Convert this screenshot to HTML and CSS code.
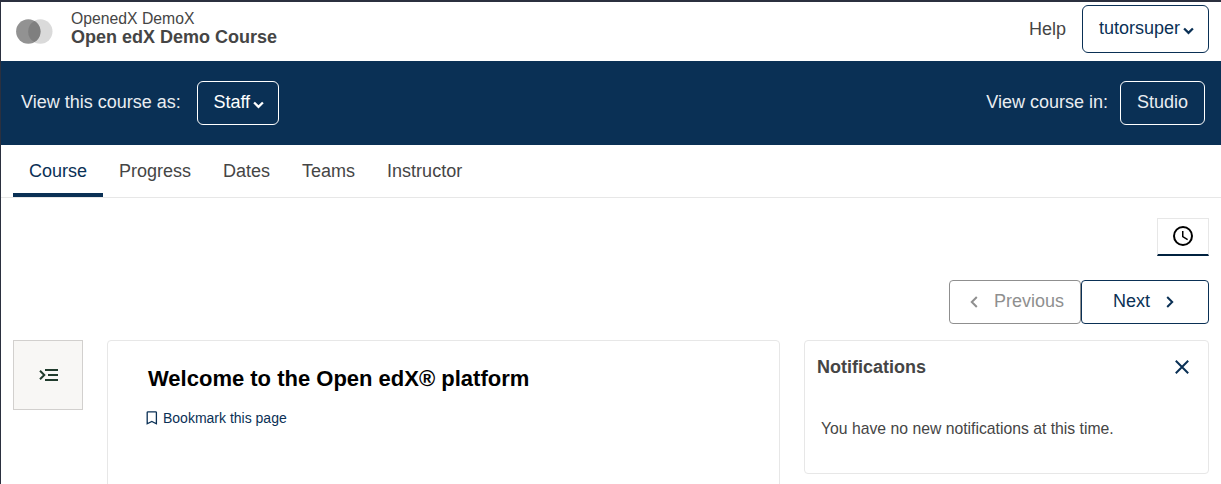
FILE: index.html
```
<!DOCTYPE html>
<html lang="en">
<head>
<meta charset="utf-8">
<title>Open edX Demo Course</title>
<link rel="stylesheet" href="styles.css">
</head>
<body>
<div class="page">
  <header class="header">
    <svg class="logo" width="37" height="25" viewBox="0 0 37 25">
      <circle cx="24.3" cy="12.5" r="12.2" fill="#dadada"/>
      <circle cx="12.3" cy="12.5" r="12.2" fill="#929292"/>
      <path d="M18.3 1.9a12.2 12.2 0 0 1 0 21.2a12.2 12.2 0 0 1 0-21.2z" fill="#7f7f7f"/>
    </svg>
    <div class="course-title">
      <span class="org">OpenedX DemoX</span>
      <span class="name">Open edX Demo Course</span>
    </div>
    <a class="help">Help</a>
    <button class="btn btn-user">tutorsuper<svg class="caret" width="11" height="8" viewBox="0 0 11 8"><path d="M1.1 1.5 5.5 5.9 9.9 1.5"/></svg></button>
  </header>
  <section class="banner">
    <span class="view-as">View this course as:</span>
    <button class="btn btn-light btn-staff">Staff<svg class="caret" width="11" height="8" viewBox="0 0 11 8"><path d="M1.1 1.5 5.5 5.9 9.9 1.5"/></svg></button>
    <span class="view-in">View course in:</span>
    <button class="btn btn-light btn-studio">Studio</button>
  </section>
  <nav class="tabs">
    <a class="tab active">Course</a>
    <a class="tab">Progress</a>
    <a class="tab">Dates</a>
    <a class="tab">Teams</a>
    <a class="tab">Instructor</a>
  </nav>
  <main class="content">
    <div class="tray-row">
      <button class="tray">
        <svg width="24" height="24" viewBox="0 0 24 24"><circle cx="12" cy="12" r="9" fill="none" stroke="#000" stroke-width="2"/><path d="M12.5 7H11v6l5.25 3.15.75-1.23-4.5-2.67z"/></svg>
      </button>
    </div>
    <div class="pager">
      <button class="btn pager-btn prev"><svg width="8" height="12" viewBox="0 0 8 12"><path d="M6.8 1 1.8 6l5 5"/></svg>Previous</button>
      <button class="btn pager-btn next">Next<svg width="8" height="12" viewBox="0 0 8 12"><path d="M1.2 1 6.2 6l-5 5"/></svg></button>
    </div>
    <div class="columns">
      <button class="outline-toggle">
        <svg width="20" height="14" viewBox="0 0 20 14" fill="none" stroke="#203b2c" stroke-width="2"><path d="M1 2.7 5.3 7 1 11.3M6 2h13M9 7h10M6 12h13"/></svg>
      </button>
      <article class="unit">
        <h1>Welcome to the Open edX® platform</h1>
        <a class="bookmark"><svg width="12" height="14" viewBox="0 0 12 14"><path d="M1.2 12.8V1.6Q1.2.8 2 .8h7.6q.8 0 .8.8v11.2L5.8 10.4z" fill="none" stroke="#0a3055" stroke-width="1.3"/></svg>Bookmark this page</a>
      </article>
      <aside class="notifications">
        <div class="notif-head">
          <h2>Notifications</h2>
          <svg width="14" height="14" viewBox="0 0 14 14"><path d="M.8.8 13.2 13.2M13.2.8.8 13.2" stroke="#0a3055" stroke-width="2"/></svg>
        </div>
        <p>You have no new notifications at this time.</p>
      </aside>
    </div>
  </main>
</div>
</body>
</html>
```
FILE: styles.css
```
* { box-sizing: border-box; }
body {
  margin: 0;
  background: #fff;
  color: #454545;
  font: 18px/28px "Liberation Sans", Arial, sans-serif;
}
.page {
  height: 484px;
  overflow: hidden;
  border-top: 2px solid #2b303f;
  border-left: 1px solid #2b303f;
}
button { margin: 0; font: inherit; cursor: pointer; }
h1, h2, p { margin: 0; }
.btn {
  display: flex;
  align-items: center;
  justify-content: center;
  padding: 0 0 2px;
  background: transparent;
  border: 1px solid #0a3055;
  border-radius: 6px;
  color: #0a3055;
}
.caret {
  margin: 5px 0 0 3px;
  fill: none;
  stroke: currentColor;
  stroke-width: 2.3;
}

.header {
  display: flex;
  align-items: center;
  height: 59px;
  padding: 0 12px 0 15px;
}
.logo { flex: none; margin: 0 18px 1px 0; }
.course-title { display: flex; flex-direction: column; flex: 1; padding-bottom: 8px; }
.org { font-size: 15.75px; line-height: 18px; }
.name { font-weight: bold; line-height: 18px; }
.help { margin-right: 16px; padding-bottom: 5px; }
.btn-user { width: 127px; height: 48px; margin-bottom: 5px; padding-left: 2px; }

.banner {
  display: flex;
  align-items: center;
  height: 84px;
  padding: 0 16px 0 20px;
  background: #0a3055;
  color: #e9edf1;
}
.btn-light { height: 44px; border-color: #fff; color: #fff; }
.view-as { margin-right: 16px; padding-bottom: 2px; }
.btn-staff { width: 82px; padding-left: 2px; }
.view-in { margin: 0 12px 0 auto; padding-bottom: 2px; }
.btn-studio { width: 85px; color: #e9edf1; }

.tabs {
  display: flex;
  height: 53px;
  padding-left: 12px;
  border-bottom: 1px solid #e7e7e7;
}
.tab {
  height: 52px;
  padding: 12px 16px 0;
  border-bottom: 4px solid transparent;
}
.tab.active { color: #0a3055; border-color: #0a3055; }

.content { padding: 20px 12px 0; }
.tray-row { display: flex; justify-content: flex-end; }
.tray {
  display: grid;
  place-items: center;
  width: 52px;
  height: 38px;
  padding: 0 0 1px;
  background: #fff;
  border: 1px solid #e7e7e7;
  border-bottom-width: 1px;
  border-bottom: 2px solid #00213f;
}
.pager { display: flex; justify-content: flex-end; margin-top: 24px; }
.pager-btn { height: 44px; border-radius: 4px; }
.pager-btn svg { fill: none; stroke: currentColor; stroke-width: 2; margin-top: 2px; }
.prev { width: 132px; gap: 16px; padding-left: 4px; border-color: #8f8f8f; color: #8f8f8f; }
.next { width: 128px; gap: 16px; padding-right: 3px; }

.columns {
  display: grid;
  grid-template-columns: 70px 673px 405px;
  gap: 24px;
  align-items: start;
  margin-top: 16px;
}
.outline-toggle {
  display: grid;
  place-items: center;
  width: 70px;
  height: 70px;
  padding: 0 0 0 2px;
  background: #f8f7f5;
  border: 1px solid #d2d0ce;
}
.unit {
  height: 180px;
  padding: 24px 38px 0 40px;
  border: 1px solid #e7e7e7;
  border-radius: 4px;
}
.unit h1 { color: #000; font-size: 22px; line-height: 28px; }
.bookmark {
  display: flex;
  align-items: center;
  gap: 5px;
  margin: 15px 0 0 -2px;
  color: #0a3055;
  font-size: 14px;
  line-height: 20px;
}
.notifications {
  height: 134px;
  padding: 12px 19px 0 12px;
  border: 1px solid #e7e7e7;
  border-radius: 4px;
}
.notif-head { display: flex; align-items: center; justify-content: space-between; }
.notif-head h2 { font-size: 18px; line-height: 28px; }
.notifications p { margin: 35px 0 0 4px; font-size: 15.75px; line-height: 26px; }
```
